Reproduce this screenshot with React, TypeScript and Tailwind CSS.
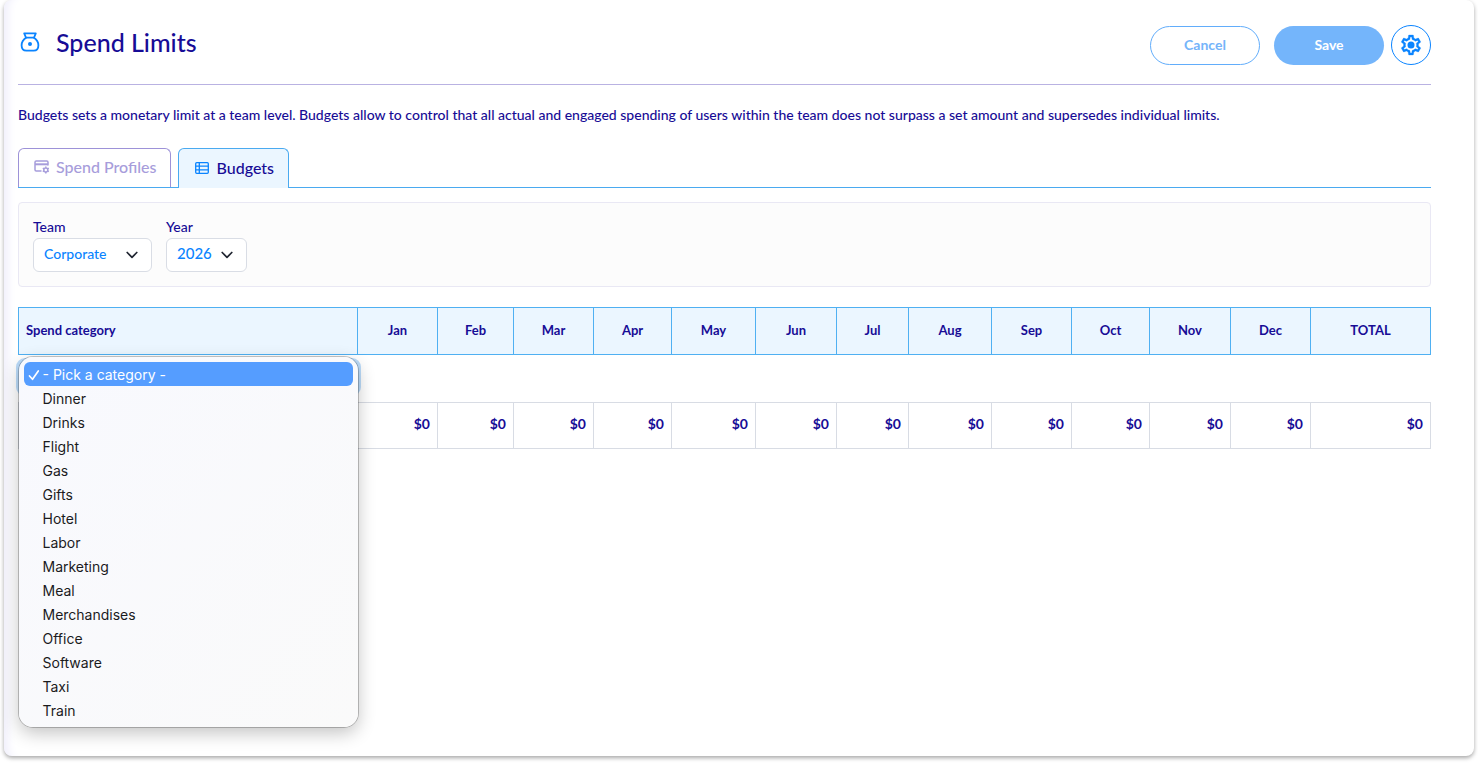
import { useState } from "react";

const months = [
  { name: "Jan", col: "w-[80px]" },
  { name: "Feb", col: "w-[76px]" },
  { name: "Mar", col: "w-[80px]" },
  { name: "Apr", col: "w-[78px]" },
  { name: "May", col: "w-[84px]" },
  { name: "Jun", col: "w-[81px]" },
  { name: "Jul", col: "w-[72px]" },
  { name: "Aug", col: "w-[83px]" },
  { name: "Sep", col: "w-[80px]" },
  { name: "Oct", col: "w-[78px]" },
  { name: "Nov", col: "w-[81px]" },
  { name: "Dec", col: "w-[80px]" },
  { name: "TOTAL", col: "w-[120px]" },
];

const categories = [
  "- Pick a category -",
  "Dinner",
  "Drinks",
  "Flight",
  "Gas",
  "Gifts",
  "Hotel",
  "Labor",
  "Marketing",
  "Meal",
  "Merchandises",
  "Office",
  "Software",
  "Taxi",
  "Train",
];

function MoneyBagIcon() {
  return (
    <svg viewBox="0 0 20 20" className="size-5" fill="none" stroke="#0a84ff" strokeWidth="1.8" strokeLinejoin="round" aria-hidden="true">
      <path d="M4.2 1.4h11.6L14 5.600H6z" />
      <path d="M6.400 5.600C3.400 7.600 1.600 10.400 1.600 13.200c0 3.400 1.800 5.400 4.800 5.400h7.200c3 0 4.800-2 4.800-5.400 0-2.800-1.800-5.600-4.800-7.600" />
      <circle cx="10" cy="12" r="2" fill="#0a84ff" stroke="none" />
    </svg>
  );
}

function GearIcon() {
  return (
    <svg viewBox="0 0 24 24" className="size-6" fill="#0a84ff" aria-hidden="true">
      <path stroke="#0a84ff" strokeWidth="0.300" d="M19.43 12.98c.04-.32.07-.64.07-.98 0-.34-.03-.66-.07-.98l2.11-1.65c.19-.15.24-.42.12-.64l-2-3.46c-.09-.16-.26-.25-.44-.25-.06 0-.12.01-.17.03l-2.49 1c-.52-.4-1.08-.73-1.69-.98l-.38-2.65C14.46 2.18 14.25 2 14 2h-4c-.25 0-.46.18-.49.42l-.38 2.65c-.61.25-1.17.59-1.69.98l-2.49-1c-.06-.02-.12-.03-.18-.03-.17 0-.34.09-.43.25l-2 3.46c-.13.22-.07.49.12.64l2.11 1.65c-.04.32-.07.65-.07.98 0 .33.03.66.07.98l-2.11 1.65c-.19.15-.24.42-.12.64l2 3.46c.09.16.26.25.44.25.06 0 .12-.01.17-.03l2.49-1c.52.4 1.08.73 1.69.98l.38 2.65c.03.24.24.42.49.42h4c.25 0 .46-.18.49-.42l.38-2.65c.61-.25 1.17-.59 1.69-.98l2.49 1c.06.02.12.03.18.03.17 0 .34-.09.43-.25l2-3.46c.12-.22.07-.49-.12-.64l-2.11-1.65zm-1.98-1.71c.04.31.05.52.05.73 0 .21-.02.43-.05.73l-.14 1.13.89.7 1.08.84-.7 1.21-1.27-.51-1.04-.42-.9.68c-.43.32-.84.56-1.25.73l-1.06.43-.16 1.13-.2 1.35h-1.4l-.19-1.35-.16-1.13-1.06-.43c-.43-.18-.83-.41-1.23-.71l-.91-.7-1.06.43-1.27.51-.7-1.21 1.08-.84.89-.7-.14-1.13c-.03-.31-.05-.54-.05-.74s.02-.43.05-.73l.14-1.13-.89-.7-1.08-.84.7-1.21 1.27.51 1.04.42.9-.68c.43-.32.84-.56 1.25-.73l1.06-.43.16-1.13.2-1.35h1.39l.19 1.35.16 1.13 1.06.43c.43.18.83.41 1.23.71l.91.7 1.06-.43 1.27-.51.7 1.21-1.07.85-.89.7.14 1.13z" />
      <circle cx="12" cy="12" r="3.500" />
    </svg>
  );
}

function CardGearIcon() {
  return (
    <svg viewBox="0 0 16 14" className="h-3.5 w-4" fill="none" stroke="#a79ddb" strokeWidth="1.500" strokeLinejoin="round" aria-hidden="true">
      <path d="M7.500 10.900H2.200C1.500 10.900 1 10.400 1 9.700V2.200C1 1.500 1.500 1 2.200 1h10.600c.7 0 1.200.5 1.200 1.200V5.400" />
      <path d="M1 4.300h13" strokeWidth="2" />
      <circle cx="11.800" cy="9.900" r="2" />
      <path d="M11.800 6.500v1.300M11.800 12v1.500M8.800 8.200l1.300.7M13.500 10.900l1.300.7M8.800 11.600l1.300-.7M13.500 8.900l1.300-.7" />
    </svg>
  );
}

function TableIcon() {
  return (
    <svg viewBox="0 0 14 12" className="h-3 w-3.5" fill="none" stroke="#0a84ff" strokeWidth="1.300" aria-hidden="true">
      <rect x="0.700" y="0.700" width="12.600" height="10.600" rx="1" />
      <path d="M4.300 .7v10.600M.7 4.200h12.600M.7 7.800h12.600" />
    </svg>
  );
}

function Chevron() {
  return (
    <svg viewBox="0 0 12 8" className="pointer-events-none absolute right-3.5 top-[13px] h-2 w-3" fill="none" stroke="#1f2430" strokeWidth="1.700" strokeLinecap="round" strokeLinejoin="round" aria-hidden="true">
      <path d="M1.200 1.500 6 6.300l4.800-4.800" />
    </svg>
  );
}

export default function App() {
  const [picked, setPicked] = useState(categories[0]);

  return (
    <div className="min-h-screen bg-white px-1 pb-2 font-['Lato',sans-serif] text-[#170c96]">
      <main className="min-h-[756px] rounded-lg bg-white pl-3.5 pr-[43px] pt-6 shadow-[inset_12px_0_10px_-8px_#f0effc,0_2px_4px_rgba(0,0,0,0.35)]">
        <header className="flex h-[61px] items-start justify-between border-b border-[#b9b2e2]">
          <div className="flex items-center gap-4 pl-0.5 pt-0.5">
            <MoneyBagIcon />
            <h1 className="text-[25px] leading-8 font-medium">Spend Limits</h1>
          </div>
          <div className="flex items-center pt-px">
            <button type="button" className="h-[39px] w-[110px] rounded-full border border-[#62adfb] pb-0.5 text-[14px] font-bold text-[#74b4fa]">
              Cancel
            </button>
            <button type="button" className="ml-3.5 h-[39px] w-[110px] rounded-full bg-[#74b5fb] pb-0.5 text-[14px] font-bold text-white">
              Save
            </button>
            <button type="button" aria-label="Settings" className="ml-[7px] flex size-10 items-center justify-center rounded-full border border-[#0a84ff]">
              <GearIcon />
            </button>
          </div>
        </header>

        <p className="mt-5 text-[14px] leading-5 font-medium">
          Budgets sets a monetary limit at a team level. Budgets allow to control that all actual and engaged spending of users within the team does not surpass a set amount and supersedes individual limits.
        </p>

        <div role="tablist" className="mt-[23px] flex h-10 gap-[7px] border-b border-[#4aaaf0]">
          <button type="button" role="tab" aria-selected="false" className="flex h-[39px] items-center gap-1.5 rounded-t-md border border-b-0 border-[#9d92d8] pr-[13px] pb-0.5 pl-[15px] text-base font-medium text-[#a79ddb]">
            <CardGearIcon />
            Spend Profiles
          </button>
          <button type="button" role="tab" aria-selected="true" className="flex h-10 items-center gap-2 rounded-t-md border border-b-0 border-[#4aaaf0] bg-[#ebf6ff] pr-3.5 pb-0.5 pl-4 text-base font-medium">
            <TableIcon />
            Budgets
          </button>
        </div>

        <section className="mt-3.5 flex h-[85px] gap-3.5 rounded border border-[#e9e8f4] bg-[#fcfcfc] px-3.5 pt-3.5">
          <div>
            <label htmlFor="team" className="block text-[14px] leading-5 font-medium">Team</label>
            <div className="relative mt-px">
              <select id="team" className="h-[34px] w-[119px] appearance-none rounded-md border border-[#d9dde5] bg-white pb-[3px] pl-2.5 text-[14px] font-medium text-[#0a84ff]">
                <option>Corporate</option>
              </select>
              <Chevron />
            </div>
          </div>
          <div>
            <label htmlFor="year" className="block text-[14px] leading-5 font-medium">Year</label>
            <div className="relative mt-px">
              <select id="year" className="h-[34px] w-[81px] appearance-none rounded-md border border-[#d9dde5] bg-white pb-[3px] pl-2.5 text-[15px] font-medium text-[#0a84ff]">
                <option>2026</option>
              </select>
              <Chevron />
            </div>
          </div>
        </section>

        <table className="mt-5 w-full table-fixed border-collapse text-[13px] font-bold">
          <colgroup>
            <col />
            {months.map((m) => (
              <col key={m.name} className={m.col} />
            ))}
          </colgroup>
          <thead>
            <tr className="h-[47px] bg-[#ebf6ff]">
              <th className="border border-[#4fb0f2] pl-[7px] text-left">Spend category</th>
              {months.map((m) => (
                <th key={m.name} className="border border-[#4fb0f2]">{m.name}</th>
              ))}
            </tr>
          </thead>
          <tbody>
            <tr className="h-12">
              <td className="p-0 align-top">
                <div className="relative pt-1.5">
                  <select
                    aria-label="Spend category"
                    value={picked}
                    onChange={(e) => setPicked(e.target.value)}
                    className="block h-8 w-full appearance-none rounded-md border border-[#a9cdf2] bg-white pl-2 font-medium ring-3 ring-[#bcdcfa]"
                  >
                    {categories.map((c) => (
                      <option key={c}>{c}</option>
                    ))}
                  </select>
                  <ul
                    role="listbox"
                    aria-label="Spend categories"
                    className="absolute inset-x-0 top-[2px] z-10 rounded-[14px] bg-gradient-to-br from-[#f8f9fe] to-[#fafafa] p-[5px] font-['Inter',sans-serif] text-[14px] leading-6 font-normal text-[#1b1b1d] shadow-[0_0_0_1px_rgba(0,0,0,0.22),0_6px_18px_rgba(0,0,0,0.24)]"
                  >
                    {categories.map((c) => (
                      <li
                        key={c}
                        role="option"
                        aria-selected={c === picked}
                        onClick={() => setPicked(c)}
                        className={
                          c === picked
                            ? "flex h-6 items-center rounded-md bg-[#559dff] pt-0.5 text-white"
                            : "flex h-6 items-center rounded-md pt-0.5"
                        }
                      >
                        <span className="flex w-[19px] pl-1">
                          {c === picked && (
                            <svg viewBox="0 0 12 12" className="size-3" fill="none" stroke="currentColor" strokeWidth="1.700" strokeLinecap="round" strokeLinejoin="round" aria-hidden="true">
                              <path d="M1.500 7 4.500 10.300 10.300 2" />
                            </svg>
                          )}
                        </span>
                        {c}
                      </li>
                    ))}
                  </ul>
                </div>
              </td>
              <td colSpan={13} />
            </tr>
            <tr className="h-[46px]">
              <td className="border border-[#d8dce4]" />
              {months.map((m) => (
                <td key={m.name} className="border border-[#d8dce4] pr-[7px] pb-1 text-right text-[14px]">$0</td>
              ))}
            </tr>
          </tbody>
        </table>
      </main>
    </div>
  );
}
